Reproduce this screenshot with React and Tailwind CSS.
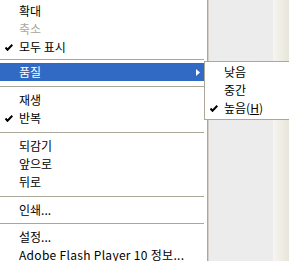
const font = { fontFamily: '"Noto Sans CJK KR", "Liberation Sans", sans-serif' }

function Check({ white }) {
  return (
    <svg width="8" height="7" viewBox="0 0 8 7" className="absolute left-[5px] top-[6px]">
      <path d="M0.5 3.5 L2.5 5.8 L7.3 0.8" fill="none" stroke={white ? "#fff" : "#000"} strokeWidth="2" />
    </svg>
  )
}

function Item({ label, checked, disabled, active, arrow, last }) {
  return (
    <div
      className={
        "relative flex pl-[19px] text-[12px] leading-none whitespace-nowrap " +
        (last ? "h-[15px] items-end tracking-[0.3px] " : "h-[18px] items-center ") +
        (active ? "bg-[#316ac5] text-white " : "") +
        (disabled ? "text-[#aca899]" : active ? "" : "text-black")
      }
    >
      {checked && <Check white={active} />}
      <span>{label}</span>
      {arrow && (
        <svg width="4" height="7" viewBox="0 0 4 7" className="absolute left-[196px] top-[6px]">
          <path d="M0 0 L4 3.5 L0 7 Z" fill="#fff" />
        </svg>
      )}
    </div>
  )
}

function Sep({ h }) {
  return (
    <div className={"flex items-center pr-[3px] " + h}>
      <div className="h-px w-full bg-[#aca899]"></div>
    </div>
  )
}

export default function App() {
  return (
    <div className="relative w-[289px] h-[261px] overflow-hidden flex bg-white" style={font}>
      {/* MAIN MENU */}
      <div className="w-[208px] shrink-0 pt-[2px] border-r border-[#aca899]">
        <Item label="확대" />
        <Item label="축소" disabled />
        <Item label="모두 표시" checked />
        <Sep h="h-[7px]" />
        <Item label="품질" active arrow />
        <Sep h="h-[10px]" />
        <Item label="재생" />
        <Item label="반복" checked />
        <Sep h="h-[10px]" />
        <Item label="되감기" />
        <Item label="앞으로" />
        <Item label="뒤로" />
        <Sep h="h-[10px]" />
        <Item label="인쇄..." />
        <Sep h="h-[9px]" />
        <Item label="설정..." />
        <Item label="Adobe Flash Player 10 정보..." last />
      </div>

      {/* BACKGROUND */}
      <div className="flex-1 border-l border-[#d4d0c8] bg-gradient-to-r from-[#ececec] from-80% via-[#f6f5ef] to-[#e8e6da]"></div>

      {/* SUBMENU */}
      <div className="absolute left-[204px] top-[61px] w-[100px] bg-white border border-[#aca899] pt-[1px] pb-[2px]">
        <Item label="낮음" />
        <Item label="중간" />
        <Item
          label={
            <>
              높음(<span className="underline">H</span>)
            </>
          }
          checked
        />
      </div>
    </div>
  )
}
